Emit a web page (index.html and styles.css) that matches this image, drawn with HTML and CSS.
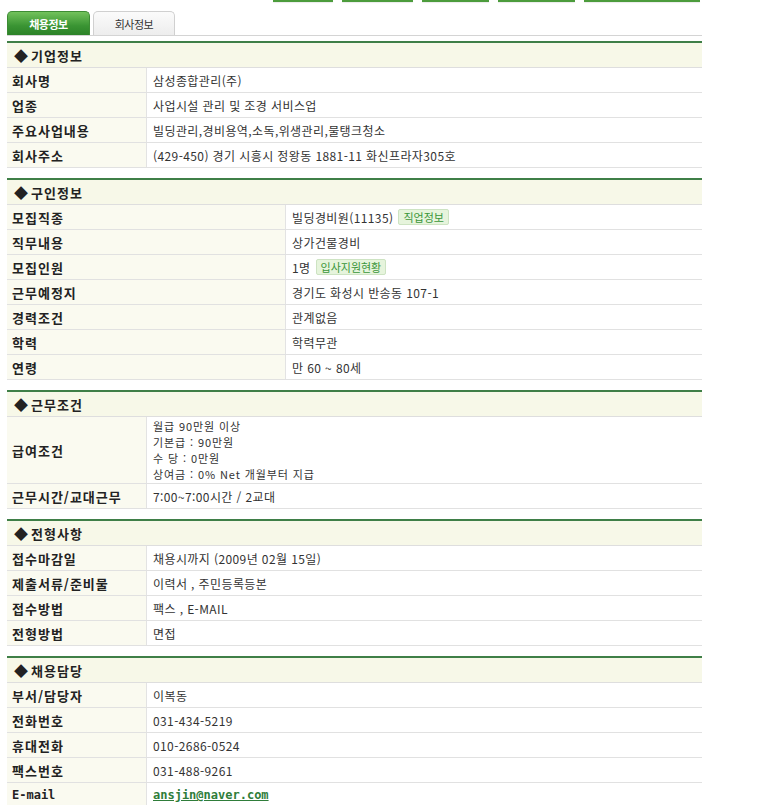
FILE: index.html
```html
<!DOCTYPE html>
<html lang="ko">
<head>
<meta charset="utf-8">
<title>채용정보</title>
<link rel="stylesheet" href="styles.css">
</head>
<body>
<div class="page">
  <div class="topbtns">
    <span class="tb w60"></span><span class="tb w71"></span><span class="tb w67"></span><span class="tb w77"></span><span class="tb w116"></span>
  </div>
  <div class="tabs">
    <div class="tab on">채용정보</div>
    <div class="tab off">회사정보</div>
  </div>

  <section class="sec">
    <div class="hd"><span class="dia">◆</span> 기업정보</div>
    <div class="row"><div class="lb">회사명</div><div class="vl">삼성종합관리(주)</div></div>
    <div class="row"><div class="lb">업종</div><div class="vl">사업시설 관리 및 조경 서비스업</div></div>
    <div class="row"><div class="lb">주요사업내용</div><div class="vl">빌딩관리,경비용역,소독,위생관리,물탱크청소</div></div>
    <div class="row"><div class="lb">회사주소</div><div class="vl">(429-450) 경기 시흥시 정왕동 1881-11 화신프라자305호</div></div>
  </section>

  <section class="sec wide">
    <div class="hd"><span class="dia">◆</span> 구인정보</div>
    <div class="row"><div class="lb">모집직종</div><div class="vl">빌딩경비원(11135)<span class="badge">직업정보</span></div></div>
    <div class="row"><div class="lb">직무내용</div><div class="vl">상가건물경비</div></div>
    <div class="row"><div class="lb">모집인원</div><div class="vl">1명<span class="badge">입사지원현황</span></div></div>
    <div class="row"><div class="lb">근무예정지</div><div class="vl">경기도 화성시 반송동 107-1</div></div>
    <div class="row"><div class="lb">경력조건</div><div class="vl">관계없음</div></div>
    <div class="row"><div class="lb">학력</div><div class="vl">학력무관</div></div>
    <div class="row"><div class="lb">연령</div><div class="vl">만 60 ~ 80세</div></div>
  </section>

  <section class="sec">
    <div class="hd"><span class="dia">◆</span> 근무조건</div>
    <div class="row"><div class="lb">급여조건</div><div class="vl multi">월급 90만원 이상<br>기본급 : 90만원<br>수 당 : 0만원<br>상여금 : 0% Net 개월부터 지급</div></div>
    <div class="row"><div class="lb">근무시간/교대근무</div><div class="vl">7:00~7:00시간 / 2교대</div></div>
  </section>

  <section class="sec">
    <div class="hd"><span class="dia">◆</span> 전형사항</div>
    <div class="row"><div class="lb">접수마감일</div><div class="vl">채용시까지 (2009년 02월 15일)</div></div>
    <div class="row"><div class="lb">제출서류/준비물</div><div class="vl">이력서 , 주민등록등본</div></div>
    <div class="row"><div class="lb">접수방법</div><div class="vl">팩스 , E-MAIL</div></div>
    <div class="row"><div class="lb">전형방법</div><div class="vl">면접</div></div>
  </section>

  <section class="sec">
    <div class="hd"><span class="dia">◆</span> 채용담당</div>
    <div class="row"><div class="lb">부서/담당자</div><div class="vl">이복동</div></div>
    <div class="row"><div class="lb">전화번호</div><div class="vl">031-434-5219</div></div>
    <div class="row"><div class="lb">휴대전화</div><div class="vl">010-2686-0524</div></div>
    <div class="row"><div class="lb">팩스번호</div><div class="vl">031-488-9261</div></div>
    <div class="row"><div class="lb mono">E-mail</div><div class="vl"><a class="mail" href="#">ansjin@naver.com</a></div></div>
  </section>
</div>
</body>
</html>
```
FILE: styles.css
```css
* { box-sizing: border-box; }
html, body { margin: 0; padding: 0; background: #fff; }
body {
  font-family: "Noto Sans CJK KR", "Liberation Sans", sans-serif;
  font-size: 12px;
  color: #333;
}
.page { padding-left: 7px; width: 702px; }

.topbtns { display: flex; gap: 9px; margin-left: 266px; height: 3px; }
.tb { height: 2px; background: #4c9c3c; box-shadow: 0 1px 1px rgba(0,0,0,0.08); }
.w60 { width: 60px; }
.w71 { width: 71px; }
.w67 { width: 67px; }
.w77 { width: 77px; }
.w116 { width: 116px; }

.tabs {
  display: flex;
  margin-top: 8px;
  height: 25px;
  border-bottom: 1px solid #d4d4d4;
  width: 695px;
}
.tab {
  height: 24px;
  display: flex;
  align-items: center;
  justify-content: center;
  font-size: 11px;
  letter-spacing: -0.5px;
  border-radius: 5px 5px 0 0;
}
.tab.on {
  width: 83px;
  color: #fff;
  font-weight: bold;
  background: linear-gradient(#72c25c, #3a9433 60%, #2c8228);
  border: 1px solid #3d8c34;
  border-bottom: none;
}
.tab.off {
  width: 82px;
  margin-left: 3px;
  color: #333;
  background: linear-gradient(#fbfbfb, #ededed);
  border: 1px solid #d0d0d0;
  border-bottom: none;
}

.sec {
  width: 695px;
  border-top: 2px solid #3f7f47;
  margin-top: 5px;
  margin-bottom: 10px;
}
.sec + .sec { margin-top: 0; }

.hd {
  height: 25px;
  background: #f7f8e8;
  border-bottom: 1px solid #dedede;
  display: flex;
  align-items: center;
  padding-left: 7px;
  font-weight: bold;
  font-size: 13px;
  color: #222;
  letter-spacing: 1px;
}
.dia { font-size: 14px; margin-right: 3px; letter-spacing: 0; }

.row {
  display: grid;
  grid-template-columns: 140px 1fr;
  border-bottom: 1px solid #e1e1e1;
}
.wide .row { grid-template-columns: 279px 1fr; }

.lb {
  min-height: 24px;
  background: #fafaf0;
  border-right: 1px solid #e3e3e3;
  display: flex;
  align-items: center;
  padding-left: 5px;
  font-weight: bold;
  font-size: 13px;
  color: #222;
  letter-spacing: 1px;
}
.lb.mono { font-family: "DejaVu Sans Mono", monospace; font-size: 12px; letter-spacing: 0; }

.vl {
  min-height: 24px;
  display: flex;
  align-items: center;
  padding-left: 6px;
  color: #333;
  letter-spacing: 0.4px;
}
.vl.multi {
  display: block;
  padding-top: 1px;
  padding-bottom: 1px;
  font-size: 11px;
  line-height: 16px;
  letter-spacing: 0.9px;
}

.badge {
  margin-left: 5px;
  padding: 0 4px;
  height: 16px;
  line-height: 14px;
  font-size: 11px;
  letter-spacing: 0;
  color: #3a963a;
  background: #e6f4dc;
  border: 1px solid #cde3c2;
  border-radius: 2px;
}

.mail {
  font-family: "DejaVu Sans Mono", monospace;
  font-weight: bold;
  font-size: 12px;
  letter-spacing: 0;
  color: #2f7d3a;
  text-decoration: underline;
}
```
